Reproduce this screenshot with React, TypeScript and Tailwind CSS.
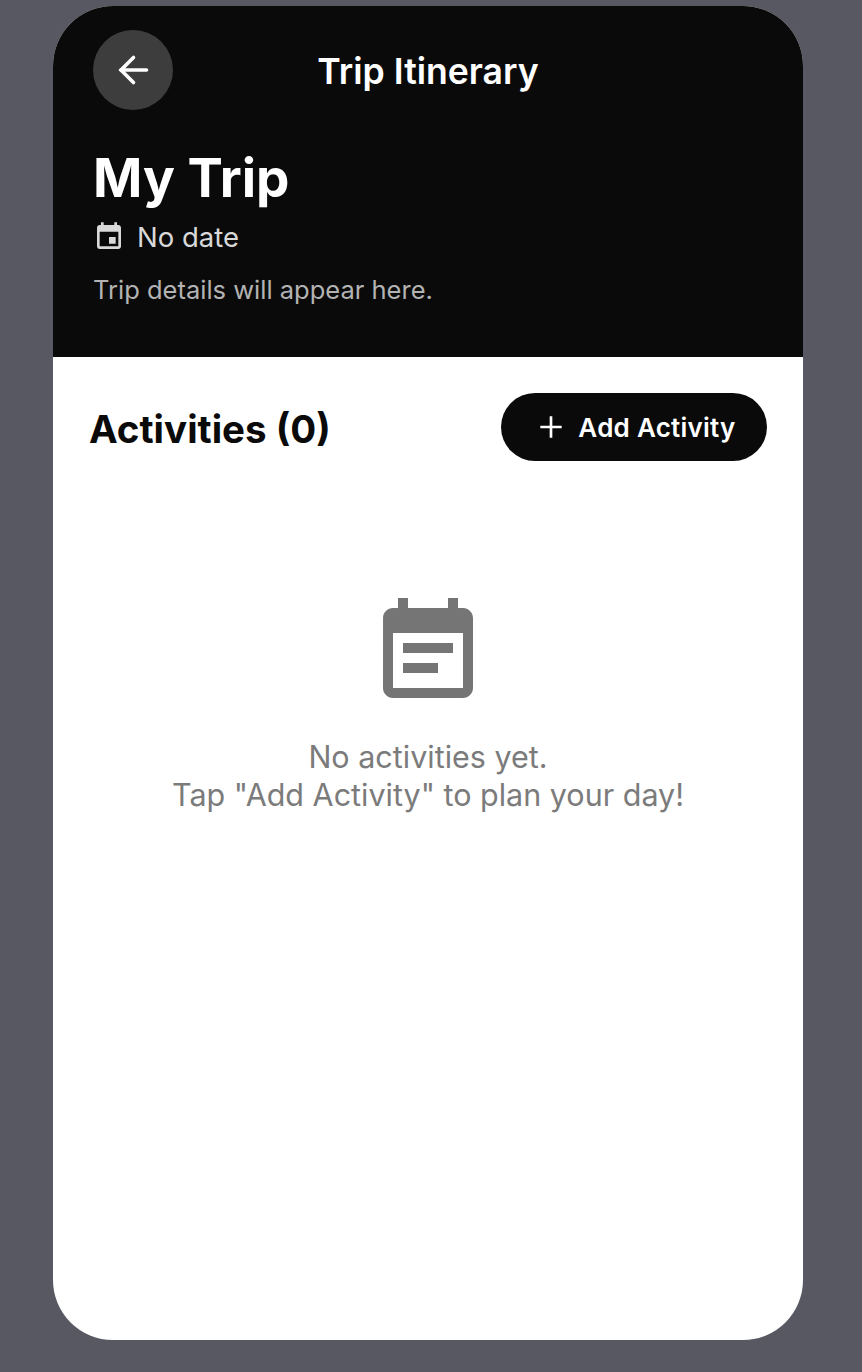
const font = { fontFamily: "Inter, sans-serif" };

function BackIcon() {
  return (
    <svg width="40" height="40" viewBox="0 0 40 40" fill="none" stroke="#fff" strokeWidth="3.6" strokeLinecap="round">
      <path d="M33.5 20H8" />
      <path d="M20.5 7.5 8 20 20.5 32.5" />
    </svg>
  );
}

function EventIcon() {
  return (
    <svg width="32" height="32" viewBox="0 0 24 24" fill="#d9d9d9">
      <path d="M17 12h-5v5h5v-5zM16 1v2H8V1H6v2H5c-1.11 0-1.99.9-1.99 2L3 19c0 1.1.89 2 2 2h14c1.1 0 2-.9 2-2V5c0-1.1-.9-2-2-2h-1V1h-2zm3 18H5V8h14v11z" />
    </svg>
  );
}

function EventNoteIcon() {
  return (
    <svg width="120" height="120" viewBox="0 0 24 24" fill="#757575">
      <path d="M17 10H7v2h10v-2zm2-7h-1V1h-2v2H8V1H6v2H5c-1.11 0-1.99.9-1.99 2L3 19c0 1.1.89 2 2 2h14c1.1 0 2-.9 2-2V5c0-1.1-.9-2-2-2zm0 16H5V8h14v11zm-5-5H7v2h7v-2z" />
    </svg>
  );
}

export default function App() {
  return (
    <div className="h-[1372px] bg-[#585862] pt-[6px] px-[53px] overflow-hidden" style={font}>
      <div className="h-[1334px] w-[750px] bg-white rounded-[60px] overflow-hidden flex flex-col">
        {/* Header */}
        <header className="h-[351px] bg-[#0a0a0a] px-[40px] pt-[24px]">
          <div className="relative flex items-center h-[80px]">
            <button className="w-[80px] h-[80px] rounded-full bg-[#3d3d3d] flex items-center justify-center">
              <BackIcon />
            </button>
            <h1 className="absolute inset-x-0 top-[24px] text-center text-[35.6px] font-semibold text-white leading-none">
              Trip Itinerary
            </h1>
          </div>
          <h2 className="mt-[37px] text-[53px] leading-[62px] font-bold text-white">My Trip</h2>
          <div className="mt-[12px] flex items-center gap-[12px] text-[#d9d9d9] text-[27.5px] leading-[32px]">
            <EventIcon />
            <span>No date</span>
          </div>
          <p className="mt-[21px] text-[25.5px] leading-[32px] text-[#b3b3b3]">Trip details will appear here.</p>
        </header>

        {/* Activities */}
        <main className="flex-1 px-[36px]">
          <div className="pt-[36px] flex items-center justify-between">
            <h3 className="text-[38.5px] leading-[72px] font-bold text-[#0a0a0a]">Activities (0)</h3>
            <button className="h-[68px] w-[266px] mb-[4px] pl-[3px] rounded-full bg-[#0a0a0a] text-white flex items-center justify-center gap-[11px] text-[26px] tracking-[0.25px] font-semibold">
              <svg width="32" height="32" viewBox="0 0 24 24" fill="none" stroke="#fff" strokeWidth="2">
                <path d="M12 4v16M4 12h16" />
              </svg>
              <span className="pt-[1px]">Add Activity</span>
            </button>
          </div>
          <div className="mt-[128px] flex flex-col items-center">
            <EventNoteIcon />
            <p className="mt-[25px] text-[30.5px] leading-[38px] text-[#7b7b7b] text-center">
              No activities yet.
              <br />
              Tap "Add Activity" to plan your day!
            </p>
          </div>
        </main>
      </div>
    </div>
  );
}
